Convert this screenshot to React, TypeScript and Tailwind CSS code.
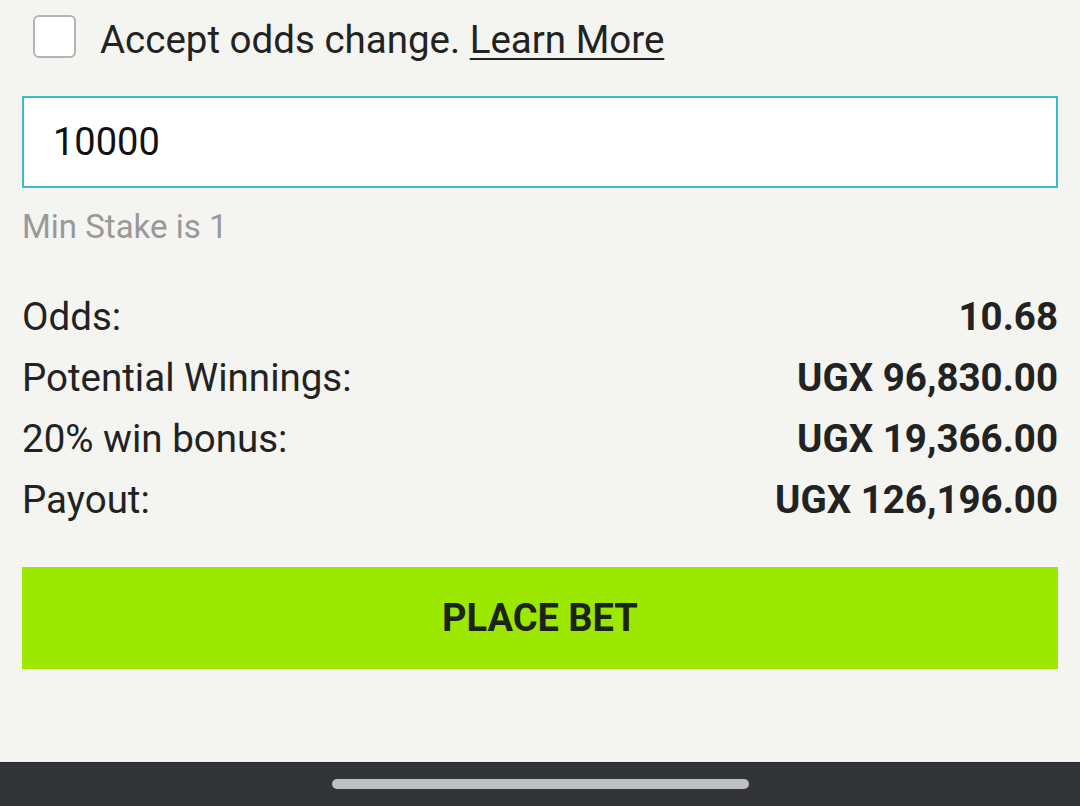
import { useState } from 'react';

const rows = [
  { label: 'Odds:', value: '10.68' },
  { label: 'Potential Winnings:', value: 'UGX 96,830.00' },
  { label: '20% win bonus:', value: 'UGX 19,366.00' },
  { label: 'Payout:', value: 'UGX 126,196.00' },
];

export default function App() {
  const [accept, setAccept] = useState(false);
  const [stake, setStake] = useState('10000');

  return (
    <div
      className="flex h-screen flex-col bg-[#f4f4f0] text-[#222222]"
      style={{ fontFamily: 'Roboto, "Noto Sans", sans-serif' }}
    >
      <div className="flex-1 px-[22px]">
        {/* Accept odds checkbox */}
        <label className="flex items-start gap-[24px] pl-[11px] pt-[15px]">
          <input
            type="checkbox"
            checked={accept}
            onChange={(e) => setAccept(e.target.checked)}
            className="h-[43px] w-[43px] shrink-0 appearance-none rounded-[6px] border-2 border-[#b4b4b4] bg-white"
          />
          <span className="text-[38.5px] leading-[50px]">
            Accept odds change.{' '}
            <a href="#" className="underline decoration-2 underline-offset-[5px]">
              Learn More
            </a>
          </span>
        </label>

        {/* Stake input */}
        <input
          value={stake}
          onChange={(e) => setStake(e.target.value)}
          className="mt-[31px] block h-[92px] w-full border-2 border-[#3cb9cb] bg-white pl-[29px] text-[38px] text-[#111111] outline-none"
        />
        <p className="mt-[19px] text-[33px] leading-[40px] text-[#999999]">Min Stake is 1</p>

        {/* Summary */}
        <div className="mt-[39px]">
          {rows.map((r) => (
            <div key={r.label} className="flex justify-between text-[38.5px] leading-[61px]">
              <span>{r.label}</span>
              <span className="font-bold">{r.value}</span>
            </div>
          ))}
        </div>

        <button className="mt-[37px] flex h-[102px] w-full items-center justify-center bg-[#9de800] text-[38px] font-bold text-[#1c2419]">
          PLACE BET
        </button>
      </div>

      {/* Android nav bar */}
      <div className="flex h-[44px] shrink-0 items-start justify-center border-t border-[#2a2a2c] bg-[#333436] pt-[16px]">
        <div className="h-[10px] w-[417px] rounded-full bg-[#c0c1c5]" />
      </div>
    </div>
  );
}
